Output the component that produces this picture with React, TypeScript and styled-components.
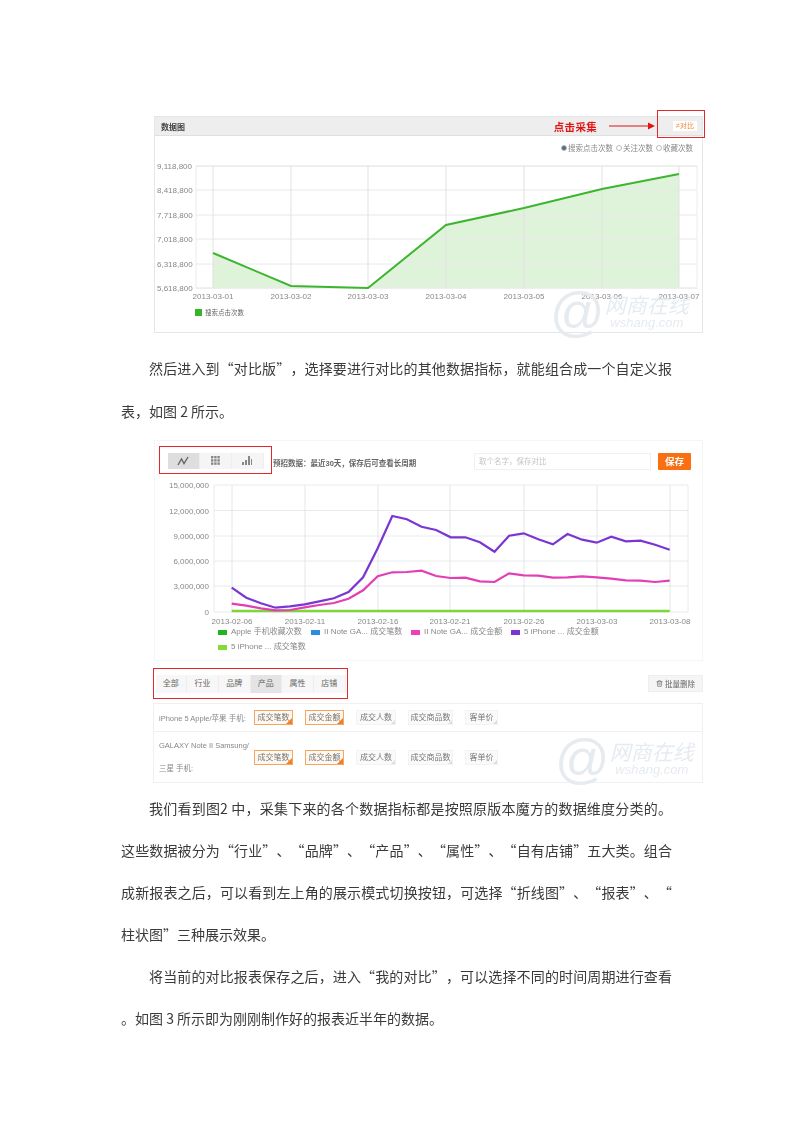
import React from 'react';
import styled, { createGlobalStyle } from 'styled-components';
import { Trash2 } from 'lucide-react';

const GlobalStyle = createGlobalStyle`
  html, body {
    margin: 0;
    padding: 0;
    background: #fff;
  }
`;

const CHART_FONT = `"Liberation Sans", "Noto Sans CJK SC", sans-serif`;

const Page = styled.div`
  box-sizing: border-box;
  width: 800px;
  height: 1132px;
  padding: 116px 0 0 121px;
  overflow: hidden;
  font-family: "Noto Sans CJK SC", "Liberation Sans", sans-serif;
  color: #3a3a3a;
`;

const Text = styled.div<{ $top: number; $lead: number }>`
  width: 551px;
  margin-top: ${(p) => p.$top}px;
  font-size: 14px;
  line-height: ${(p) => p.$lead}px;
  text-spacing-trim: space-all;
  filter: blur(0.35px);
`;

const Line = styled.div<{ $indent?: boolean; $fill?: boolean }>`
  white-space: nowrap;
  text-indent: ${(p) => (p.$indent ? '28px' : '0')};
  text-align: ${(p) => (p.$fill ? 'justify' : 'left')};
  text-align-last: ${(p) => (p.$fill ? 'justify' : 'left')};
`;

const Figure = styled.div<{ $height: number; $top?: number }>`
  position: relative;
  box-sizing: border-box;
  width: 549px;
  height: ${(p) => p.$height}px;
  margin: ${(p) => p.$top || 0}px 0 0 33px;
  font-family: ${CHART_FONT};
  color: #888;
`;

const Blurred = styled.div`
  height: 100%;
  filter: blur(0.45px);
`;

const DataCard = styled.div`
  box-sizing: border-box;
  height: 100%;
  border: 1px solid #e6e6e6;
`;

const CardHeader = styled.div`
  box-sizing: border-box;
  height: 19px;
  display: flex;
  align-items: center;
  padding: 0 4px 0 6px;
  background: #eeeeee;
  border-bottom: 1px solid #e0e0e0;
`;

const CardTitle = styled.span`
  font-size: 8px;
  font-weight: 700;
  color: #444;
`;

const Annotation = styled.span`
  margin-left: auto;
  margin-right: 12px;
  font-size: 10.5px;
  font-weight: 700;
  color: #e01414;
  letter-spacing: 0.3px;
`;

const CompareButton = styled.span`
  box-sizing: border-box;
  width: 26px;
  height: 12px;
  margin-left: 17px;
  border: 1px solid #eee;
  background: #fff;
  color: #ef8a3c;
  font-size: 7px;
  line-height: 10px;
  text-align: center;
`;

const RedFrame = styled.div`
  position: absolute;
  top: -6px;
  right: -2px;
  box-sizing: border-box;
  width: 48px;
  height: 28px;
  border: 1.5px solid #e3282c;
`;

const RadioRow = styled.div`
  height: 20px;
  display: flex;
  justify-content: flex-end;
  align-items: center;
  gap: 3px;
  padding: 3px 9px 0 0;
  box-sizing: border-box;
  font-size: 7.5px;
`;

const Radio = styled.span<{ $on?: boolean }>`
  display: flex;
  align-items: center;
  gap: 1px;

  &::before {
    content: '';
    box-sizing: border-box;
    width: 6px;
    height: 6px;
    border-radius: 50%;
    border: 1px solid #bbb;
    background: ${(p) => (p.$on ? '#4a6a90' : '#fff')};
  }
`;

const ChartSvg = styled.svg`
  display: block;
`;

const LegendOne = styled.div`
  display: flex;
  align-items: center;
  gap: 3px;
  padding: 3px 0 0 40px;
  font-size: 6.5px;
  color: #666;
`;

const Swatch = styled.i<{ $color: string; $w: number; $h: number }>`
  display: block;
  width: ${(p) => p.$w}px;
  height: ${(p) => p.$h}px;
  background: ${(p) => p.$color};
`;

const ReportCard = styled.div`
  box-sizing: border-box;
  height: 100%;
  border: 1px solid #f5f5f5;
`;

const Toolbar = styled.div`
  box-sizing: border-box;
  height: 37px;
  display: flex;
  align-items: flex-start;
  padding: 5px 11px 0 4px;
`;

const ToggleFrame = styled.div`
  box-sizing: border-box;
  width: 113px;
  height: 28px;
  padding: 5.5px 7.5px;
  border: 1.5px solid #e3282c;
`;

const ToggleGroup = styled.div`
  display: flex;
  height: 16px;
  background: #f5f5f5;
`;

const ToggleItem = styled.span<{ $on?: boolean }>`
  flex: 1;
  display: flex;
  align-items: center;
  justify-content: center;
  background: ${(p) => (p.$on ? '#dedede' : 'transparent')};
  border-right: 1px solid #eee;
`;

const Hint = styled.span`
  margin: 11px 0 0 1px;
  font-size: 7.5px;
  font-weight: 700;
  color: #666;
  white-space: nowrap;
`;

const NameInput = styled.div`
  box-sizing: border-box;
  width: 177px;
  height: 17px;
  margin: 7px 0 0 auto;
  padding-left: 4px;
  border: 1px solid #f0f0f0;
  font-size: 7.5px;
  line-height: 15px;
  color: #c4c4c4;
`;

const SaveButton = styled.span`
  width: 33px;
  height: 17px;
  margin: 7px 0 0 7px;
  background: #f96f12;
  border-radius: 1px;
  color: #fff;
  font-size: 9.5px;
  font-weight: 700;
  line-height: 17px;
  text-align: center;
`;

const LegendGrid = styled.div`
  display: flex;
  flex-wrap: wrap;
  gap: 5px 0;
  padding: 2px 0 0 63px;
  font-size: 8px;
  line-height: 10px;
`;

const LegendItem = styled.span<{ $w: number }>`
  width: ${(p) => p.$w}px;
  display: flex;
  align-items: center;
  gap: 4px;
  white-space: nowrap;
`;

const TabRow = styled.div`
  box-sizing: border-box;
  height: 42px;
  display: flex;
  align-items: flex-start;
  justify-content: space-between;
  padding-top: 7px;
`;

const TabFrame = styled.div`
  box-sizing: border-box;
  display: flex;
  width: 195px;
  height: 31px;
  padding: 5.5px 1.5px;
  margin-left: -1px;
  border: 1.5px solid #e3282c;
`;

const Tab = styled.span<{ $on?: boolean }>`
  width: 32px;
  background: ${(p) => (p.$on ? '#e4e4e4' : '#f7f7f7')};
  border-right: 1px solid #eee;
  font-size: 8px;
  line-height: 17px;
  text-align: center;
  color: #666;
`;

const BulkDelete = styled.span`
  box-sizing: border-box;
  width: 55px;
  height: 17px;
  margin-top: 7px;
  display: flex;
  align-items: center;
  justify-content: center;
  gap: 2px;
  background: #f5f5f5;
  border: 1px solid #eee;
  font-size: 7.5px;
  color: #666;
`;

const Table = styled.div`
  box-sizing: border-box;
  height: 80px;
  margin-left: -1px;
  border: 1px solid #f0f0f0;
`;

const Row = styled.div<{ $height: number }>`
  box-sizing: border-box;
  height: ${(p) => p.$height}px;
  display: grid;
  grid-template-columns: 95px 1fr;
  align-items: center;
  padding-left: 5px;

  & + & {
    border-top: 1px solid #f0f0f0;
  }
`;

const RowLabel = styled.div`
  font-size: 7.5px;
  color: #888;
  white-space: nowrap;
`;

const RowLabelTwoLines = styled(RowLabel)`
  line-height: 23px;
`;

const Chips = styled.div`
  display: flex;
  gap: 12px;
`;

const Chip = styled.span<{ $on?: boolean; $w: number }>`
  position: relative;
  box-sizing: border-box;
  width: ${(p) => p.$w}px;
  height: 15px;
  border: 1px solid ${(p) => (p.$on ? '#f2a766' : '#f3f3f3')};
  background: ${(p) => (p.$on ? '#fff8f0' : '#fafafa')};
  font-size: 8px;
  line-height: 13px;
  text-align: center;
  color: #777;

  &::after {
    content: '';
    position: absolute;
    right: 0;
    bottom: 0;
    border-style: solid;
    border-width: 0 0 ${(p) => (p.$on ? '6px 6px' : '4px 4px')};
    border-color: transparent transparent ${(p) => (p.$on ? '#f07f25' : '#ddd')} transparent;
  }
`;

const Watermark = styled.div<{ $right: number; $bottom: number }>`
  position: absolute;
  right: ${(p) => p.$right}px;
  bottom: ${(p) => p.$bottom}px;
  width: 146px;
  height: 50px;
  display: flex;
  align-items: center;
  color: #e6ebf0;
  pointer-events: none;
  filter: blur(0.4px);
`;

const WatermarkAt = styled.span`
  font-family: "Liberation Sans", sans-serif;
  font-size: 54px;
  line-height: 50px;
  font-style: italic;
`;

const WatermarkText = styled.div`
  display: flex;
  flex-direction: column;
  align-items: center;
  margin-left: 1px;
`;

const WatermarkName = styled.span`
  font-family: "Noto Sans CJK SC", sans-serif;
  font-size: 21px;
  line-height: 24px;
  font-style: italic;
`;

const WatermarkUrl = styled.span`
  font-family: "Liberation Sans", sans-serif;
  font-size: 13px;
  line-height: 14px;
  font-style: italic;
`;

// coordinates below are page pixels, shifted by the svg's own origin
const FirstChart = () => {
  const ox = 155;
  const oy = 155;
  const xs = [213, 291, 368, 446, 524, 602, 679];
  const ys = [252, 285, 287, 224, 207, 188, 173];
  const grid = [165, 189, 214, 238, 263, 287];
  const ticks = ['9,118,800', '8,418,800', '7,718,800', '7,018,800', '6,318,800', '5,618,800'];
  const line = xs.map((x, i) => `${x},${ys[i]}`).join(' ');
  return (
    <ChartSvg width={547} height={148} viewBox={`${ox} ${oy} 547 148`}>
      <polygon points={`213,287 ${line} 679,287`} fill="#dff3da" />
      <rect x={196} y={165} width={501} height={122} fill="none" stroke="#ececec" />
      {grid.map((y, i) => (
        <g key={y}>
          <line x1={196} x2={697} y1={y} y2={y} stroke="#e8e8e8" />
          <text x={157} y={y + 3} fontSize={8} fill="#888" fontFamily={CHART_FONT}>
            {ticks[i]}
          </text>
        </g>
      ))}
      {xs.map((x, i) => (
        <g key={x}>
          <line x1={x} x2={x} y1={165} y2={287} stroke="#dfe2df" />
          <text x={x} y={298} fontSize={8} fill="#888" textAnchor="middle" fontFamily={CHART_FONT}>
            {`2013-03-0${i + 1}`}
          </text>
        </g>
      ))}
      <polyline points={line} fill="none" stroke="#3cb52f" strokeWidth={2} />
    </ChartSvg>
  );
};

const purple = [458, 488, 505, 518, 514, 508, 499, 490, 471, 427, 340, 243, 253, 275, 285, 307, 307, 322, 350, 302, 295, 313, 328, 297, 314, 323, 305, 319, 317, 329, 344];
const pink = [506, 512, 520, 526, 525, 517, 510, 504, 491, 466, 424, 412, 411, 407, 423, 429, 428, 439, 441, 415, 421, 422, 428, 427, 424, 427, 431, 436, 437, 441, 437];

const toPoints = (values: number[]) =>
  values.map((v, i) => `${(231.7 + i * 14.6).toFixed(1)},${(435 + v / 3).toFixed(1)}`).join(' ');

const SecondChart = () => {
  const ox = 155;
  const oy = 478;
  const grid = [485, 510.5, 536, 561, 586, 612];
  const ticks = ['15,000,000', '12,000,000', '9,000,000', '6,000,000', '3,000,000', '0'];
  const vertical = [232, 305, 378, 450, 524, 597, 670];
  const dates = ['2013-02-06', '2013-02-11', '2013-02-16', '2013-02-21', '2013-02-26', '2013-03-03', '2013-03-08'];
  const flat = purple.map(() => 528);
  return (
    <ChartSvg width={547} height={147} viewBox={`${ox} ${oy} 547 147`}>
      {grid.map((y, i) => (
        <g key={y}>
          <line x1={214} x2={688} y1={y} y2={y} stroke="#e6eaee" />
          <text x={209} y={y + 3} fontSize={8} fill="#888" textAnchor="end" fontFamily={CHART_FONT}>
            {ticks[i]}
          </text>
        </g>
      ))}
      <line x1={214} x2={214} y1={485} y2={612} stroke="#e6eaee" />
      <line x1={688} x2={688} y1={485} y2={612} stroke="#e6eaee" />
      {vertical.map((x, i) => (
        <g key={x}>
          <line x1={x} x2={x} y1={485} y2={612} stroke="#e2e6ea" />
          <text x={x} y={624} fontSize={8} fill="#888" textAnchor="middle" fontFamily={CHART_FONT}>
            {dates[i]}
          </text>
        </g>
      ))}
      <polyline points={toPoints(flat)} fill="none" stroke="#7fd63a" strokeWidth={2.4} />
      <polyline points={toPoints(pink)} fill="none" stroke="#e23fb4" strokeWidth={2.2} />
      <polyline points={toPoints(purple)} fill="none" stroke="#7b35d0" strokeWidth={2.2} />
    </ChartSvg>
  );
};

const ModeIcon = ({ kind }: { kind: 'line' | 'grid' | 'bars' }) => {
  if (kind === 'line') {
    return (
      <svg width="12" height="10" viewBox="0 0 12 10">
        <path d="M1 9 L4.5 3 L7 7.5 L11 1" fill="none" stroke="#666" strokeWidth="1.4" />
      </svg>
    );
  }
  if (kind === 'grid') {
    return (
      <svg width="9" height="9" viewBox="0 0 9 9" fill="#888">
        {[0, 3.2, 6.4].map((x) =>
          [0, 3.2, 6.4].map((y) => <rect key={`${x}-${y}`} x={x} y={y} width="2.4" height="2.4" />)
        )}
      </svg>
    );
  }
  return (
    <svg width="10" height="9" viewBox="0 0 10 9" fill="#888">
      <rect x="0" y="6" width="2" height="3" />
      <rect x="3" y="4" width="2" height="5" />
      <rect x="6" y="0" width="2" height="9" />
      <rect x="9" y="3" width="1" height="6" />
    </svg>
  );
};

const Mark = ({ right, bottom }: { right: number; bottom: number }) => (
  <Watermark $right={right} $bottom={bottom}>
    <WatermarkAt>@</WatermarkAt>
    <WatermarkText>
      <WatermarkName>网商在线</WatermarkName>
      <WatermarkUrl>wshang.com</WatermarkUrl>
    </WatermarkText>
  </Watermark>
);

const chipList = (
  <Chips>
    <Chip $on $w={39}>成交笔数</Chip>
    <Chip $on $w={39}>成交金额</Chip>
    <Chip $w={40}>成交人数</Chip>
    <Chip $w={45}>成交商品数</Chip>
    <Chip $w={33}>客单价</Chip>
  </Chips>
);

export default function App() {
  return (
    <Page lang="zh-CN">
      <GlobalStyle />

      <Figure $height={217}>
        <Blurred>
          <DataCard>
            <CardHeader>
              <CardTitle>数据图</CardTitle>
              <Annotation>点击采集</Annotation>
              <svg width="46" height="8" viewBox="0 0 46 8">
                <path d="M0 4 H40" stroke="#e01414" strokeWidth="1" />
                <path d="M39 0.5 L46 4 L39 7.5 Z" fill="#e01414" />
              </svg>
              <CompareButton>≠对比</CompareButton>
            </CardHeader>
            <RadioRow>
              <Radio $on>搜索点击次数</Radio>
              <Radio>关注次数</Radio>
              <Radio>收藏次数</Radio>
            </RadioRow>
            <FirstChart />
            <LegendOne>
              <Swatch $color="#35b527" $w={7} $h={7} />
              搜索点击次数
            </LegendOne>
          </DataCard>
          <RedFrame />
        </Blurred>
        <Mark right={8} bottom={-3} />
      </Figure>

      <Text $top={14} $lead={42.5}>
        <Line $indent $fill>然后进入到“对比版”，选择要进行对比的其他数据指标，就能组合成一个自定义报</Line>
        <Line>表，如图 2 所示。</Line>
      </Text>

      <Figure $height={221} $top={8}>
        <Blurred>
          <ReportCard>
            <Toolbar>
              <ToggleFrame>
                <ToggleGroup>
                  <ToggleItem $on><ModeIcon kind="line" /></ToggleItem>
                  <ToggleItem><ModeIcon kind="grid" /></ToggleItem>
                  <ToggleItem><ModeIcon kind="bars" /></ToggleItem>
                </ToggleGroup>
              </ToggleFrame>
              <Hint>预招数据：最近30天，保存后可查看长周期</Hint>
              <NameInput>取个名字，保存对比</NameInput>
              <SaveButton>保存</SaveButton>
            </Toolbar>
            <SecondChart />
            <LegendGrid>
              <LegendItem $w={93}><Swatch $color="#1fb51f" $w={9} $h={5} />Apple 手机收藏次数</LegendItem>
              <LegendItem $w={100}><Swatch $color="#2f8be0" $w={9} $h={5} />II Note GA... 成交笔数</LegendItem>
              <LegendItem $w={100}><Swatch $color="#ee3fbb" $w={9} $h={5} />II Note GA... 成交金额</LegendItem>
              <LegendItem $w={100}><Swatch $color="#7b35d0" $w={9} $h={5} />5 iPhone ... 成交金额</LegendItem>
              <LegendItem $w={100}><Swatch $color="#84dc32" $w={9} $h={5} />5 iPhone ... 成交笔数</LegendItem>
            </LegendGrid>
          </ReportCard>
        </Blurred>
      </Figure>

      <Figure $height={121}>
        <Blurred>
          <TabRow>
            <TabFrame>
              <Tab>全部</Tab>
              <Tab>行业</Tab>
              <Tab>品牌</Tab>
              <Tab $on>产品</Tab>
              <Tab>属性</Tab>
              <Tab>店铺</Tab>
            </TabFrame>
            <BulkDelete>
              <Trash2 size={7} />
              批量删除
            </BulkDelete>
          </TabRow>
          <Table>
            <Row $height={27}>
              <RowLabel>iPhone 5 Apple/苹果 手机:</RowLabel>
              {chipList}
            </Row>
            <Row $height={51}>
              <RowLabelTwoLines>
                GALAXY Note II Samsung/
                <br />
                三星 手机:
              </RowLabelTwoLines>
              {chipList}
            </Row>
          </Table>
        </Blurred>
        <Mark right={3} bottom={-1} />
      </Figure>

      <Text $top={5} $lead={42}>
        <Line $indent $fill>我们看到图2 中，采集下来的各个数据指标都是按照原版本魔方的数据维度分类的。</Line>
        <Line $fill>这些数据被分为“行业”、“品牌”、“产品”、“属性”、“自有店铺”五大类。组合</Line>
        <Line $fill>成新报表之后，可以看到左上角的展示模式切换按钮，可选择“折线图”、“报表”、“</Line>
        <Line>柱状图”三种展示效果。</Line>
        <Line $indent $fill>将当前的对比报表保存之后，进入“我的对比”，可以选择不同的时间周期进行查看</Line>
        <Line>。如图 3 所示即为刚刚制作好的报表近半年的数据。</Line>
      </Text>
    </Page>
  );
}
